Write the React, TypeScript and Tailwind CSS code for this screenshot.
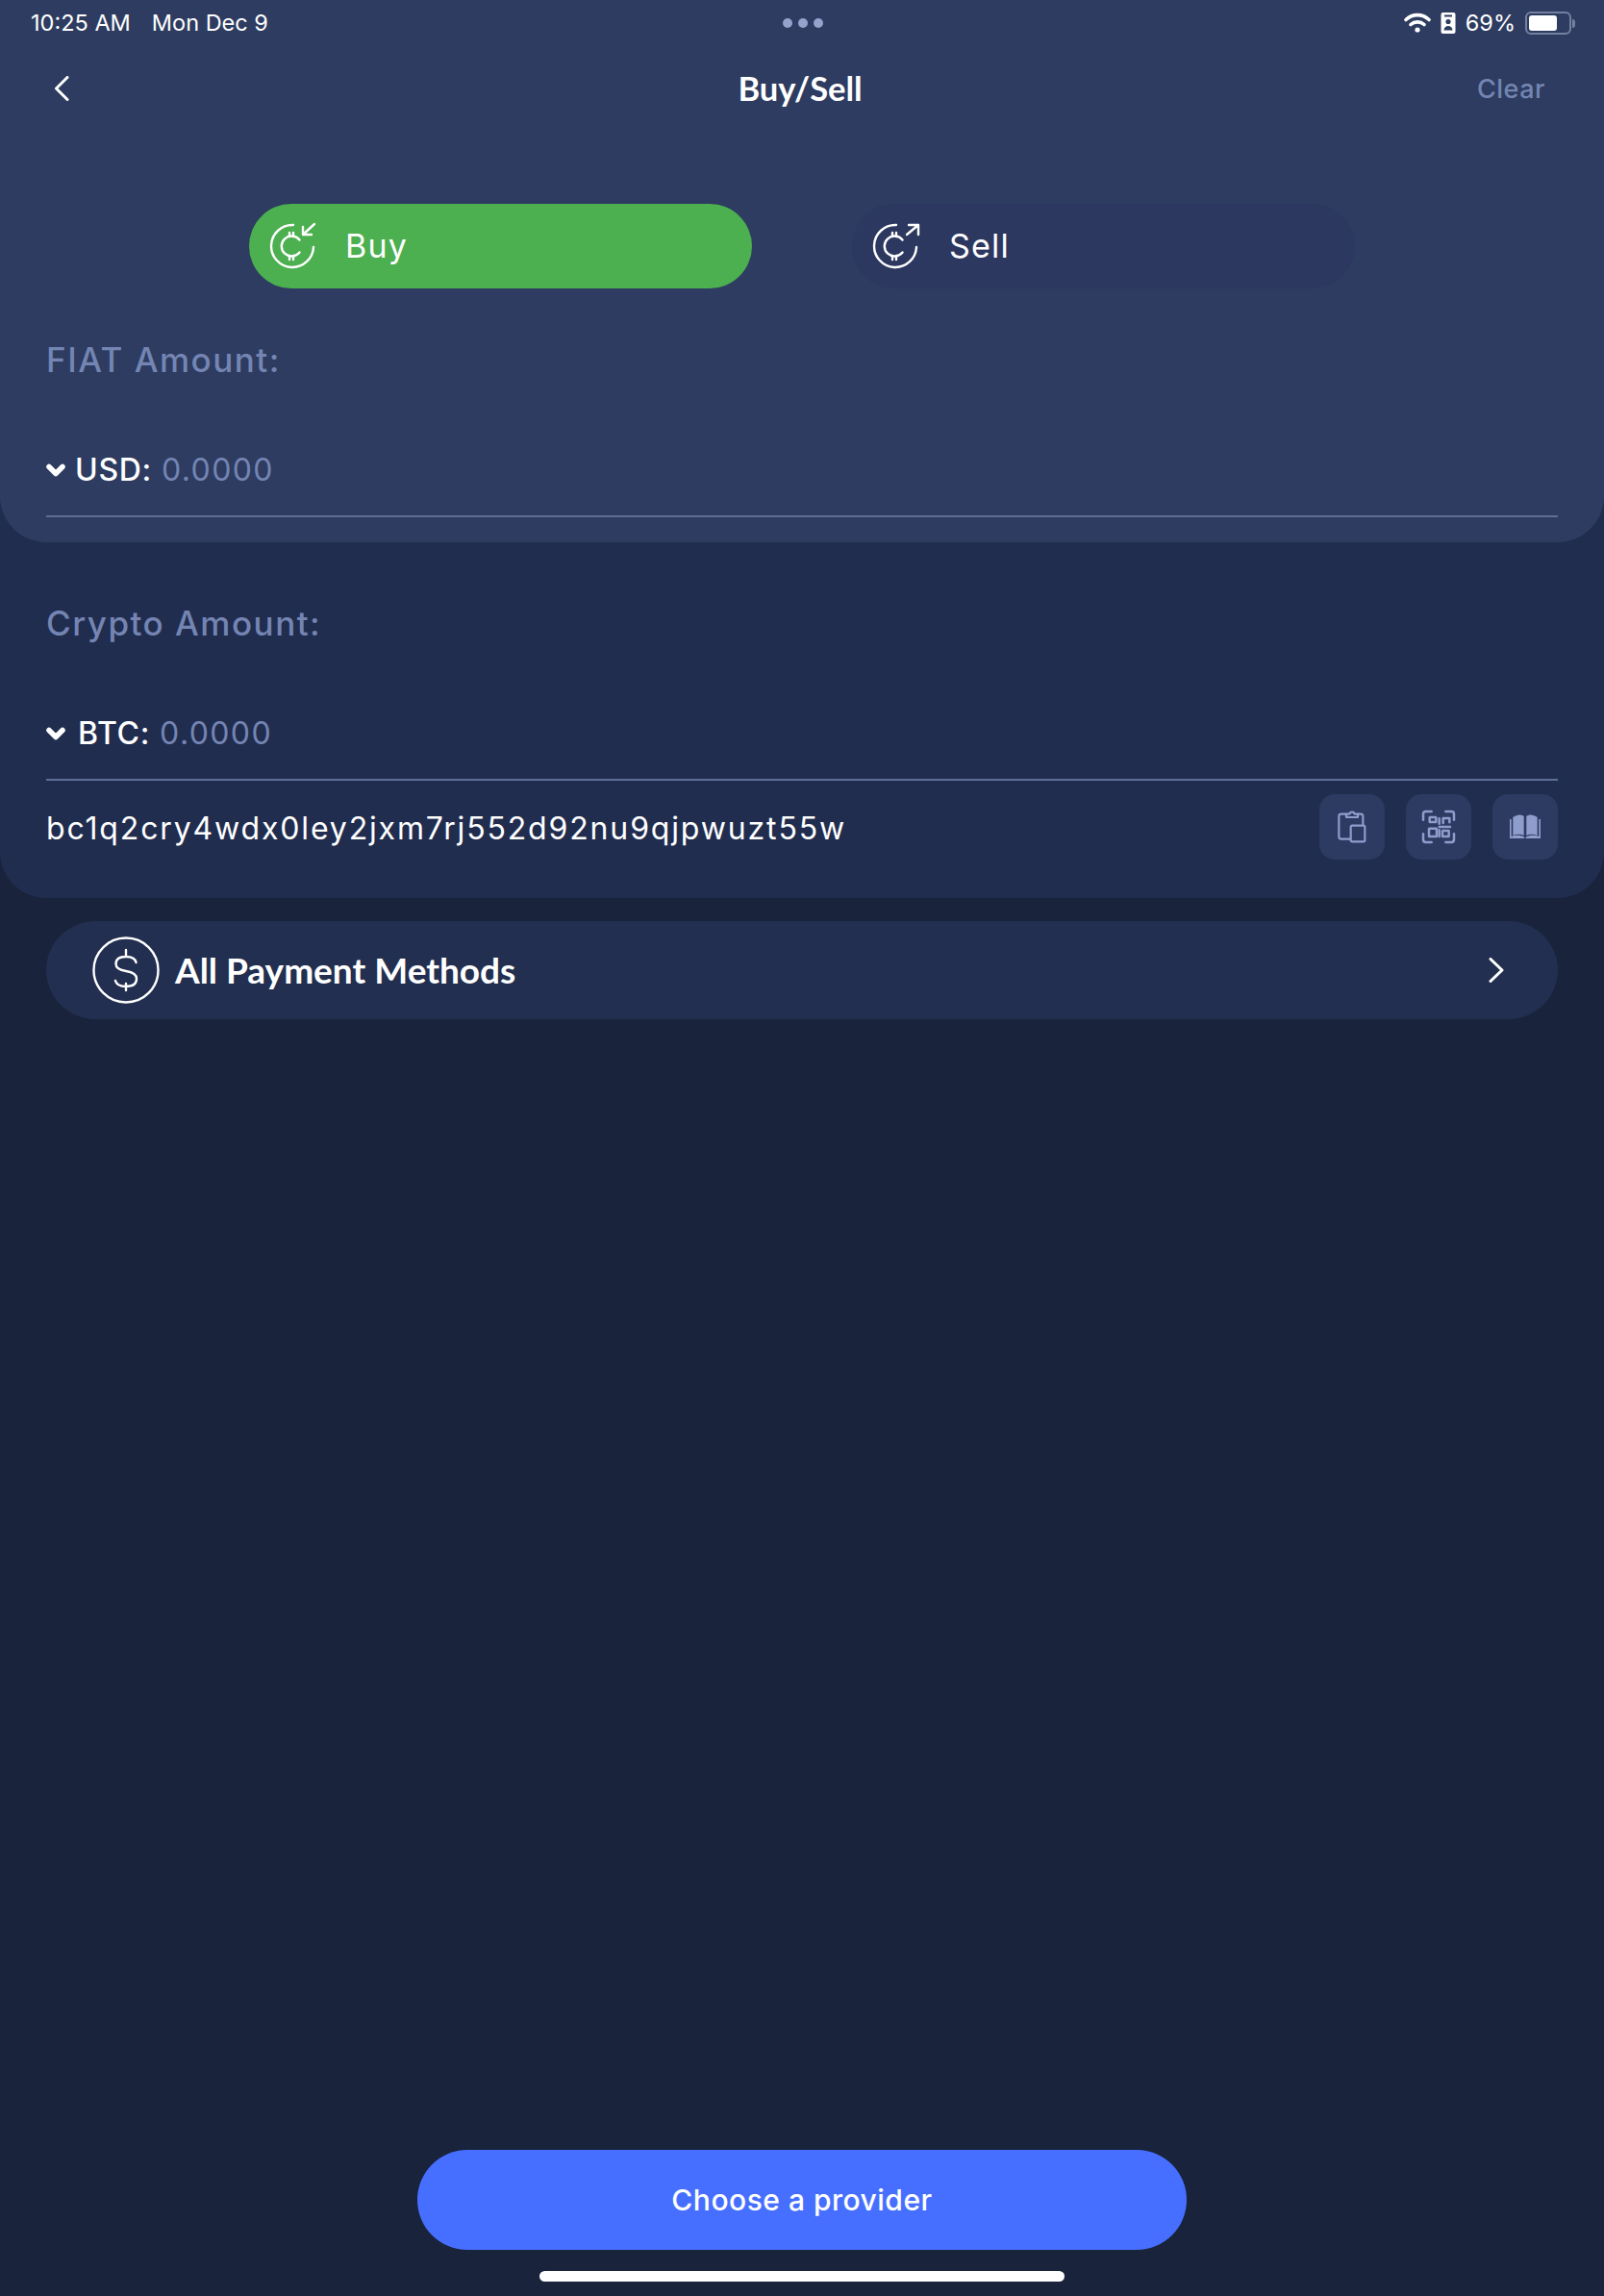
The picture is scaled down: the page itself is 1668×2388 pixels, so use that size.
const inter = "font-['Inter',sans-serif]";
const lato = "font-['Lato',sans-serif]";

function Coin({ dir }: { dir: "in" | "out" }) {
  return (
    <svg width="56" height="56" viewBox="0 0 56 56" fill="none" stroke="#fff" strokeWidth="2.4" strokeLinecap="round" strokeLinejoin="round" className="shrink-0">
      <path d="M25 6 A22 22 0 1 0 46 29" />
      <path d="M31.5 21.5 A10.5 10.5 0 1 0 31.5 34.5" />
      <path d="M21 14v4M25 14v4M21 38v4M25 38v4" />
      {dir === "in" ? <path d="M35 8v8h9M35 16L47 5" /> : <path d="M38 6h10v10M48 6L36 16" />}
    </svg>
  );
}

function Chevron() {
  return (
    <svg width="20" height="14" viewBox="0 0 20 14" className="shrink-0">
      <path d="M3 3.5L10 10.5L17 3.5" fill="none" stroke="#fff" strokeWidth="5.5" strokeLinecap="round" strokeLinejoin="round" />
    </svg>
  );
}

function AmountRow({ code, gap, valueGap, track }: { code: string; gap: string; valueGap: string; track: string }) {
  return (
    <div className={`flex h-[74px] items-start border-b-2 border-[#5e6e96] ${inter}`}>
      <div className="flex h-[50px] items-center">
        <Chevron />
        <span className={`${gap} text-[32px] font-medium ${track} text-white`}>{code}:</span>
        <span className={`${valueGap} text-[32px] tracking-[1.4px] text-[#7485b3]`}>0.0000</span>
      </div>
    </div>
  );
}

function IconButton({ children }: { children: React.ReactNode }) {
  return <div className="flex h-[68px] w-[68px] items-center justify-center rounded-[16px] bg-[#2d3a62]">{children}</div>;
}

export default function App() {
  return (
    <div className="flex h-[2388px] w-[1668px] flex-col overflow-hidden bg-[#19233c]">
      <div className="rounded-b-[48px] bg-[#212d4f]">
        <div className="h-[564px] rounded-b-[48px] bg-[#2d3c60]">
          {/* status bar */}
          <div className={`flex h-[48px] items-center justify-between pl-[32px] pr-[30px] text-[23.5px] text-white ${inter}`}>
            <div className="flex w-[400px] gap-[22px]">
              <span>10:25 AM</span>
              <span>Mon Dec 9</span>
            </div>
            <div className="flex gap-[6px]">
              <span className="h-[10px] w-[10px] rounded-full bg-[#94a3cb]" />
              <span className="h-[10px] w-[10px] rounded-full bg-[#94a3cb]" />
              <span className="h-[10px] w-[10px] rounded-full bg-[#94a3cb]" />
            </div>
            <div className="flex w-[400px] items-center justify-end">
              <svg width="28" height="22" viewBox="0 0 28 22" fill="none" stroke="#fff" strokeWidth="3.6" strokeLinecap="round">
                <path d="M2 7.5C9 1 19 1 26 7.5" />
                <path d="M7 12.5C11 9 17 9 21 12.5" />
                <circle cx="14" cy="18" r="2.6" fill="#fff" stroke="none" />
              </svg>
              <svg width="16" height="24" viewBox="0 0 16 24" className="ml-[10px]">
                <rect x="0.5" y="1" width="15" height="22" rx="2" fill="#fff" />
                <rect x="4" y="3.5" width="8" height="2" fill="#2d3c60" />
                <circle cx="8" cy="10.5" r="2.6" fill="#2d3c60" />
                <path d="M3.500 19.5c0-6 9-6 9 0z" fill="#2d3c60" />
              </svg>
              <span className="ml-[10px]">69%</span>
              <div className="ml-[10px] flex items-center">
                <div className="flex h-[24px] w-[48px] items-center rounded-[6px] border-2 border-[#74809f] p-[2px]">
                  <div className="h-[16px] w-[29px] rounded-[3px] bg-white" />
                </div>
                <div className="ml-[1px] h-[9px] w-[3px] rounded-r-full bg-[#74809f]" />
              </div>
            </div>
          </div>

          {/* header */}
          <div className="flex h-[88px] items-center justify-between pl-[56px] pr-[60px]">
            <svg width="16" height="26" viewBox="0 0 16 26" fill="none" stroke="#fff" strokeWidth="3" strokeLinecap="round" strokeLinejoin="round" className="w-[72px]" preserveAspectRatio="xMinYMid">
              <path d="M14 1.5L2.5 13L14 24.5" />
            </svg>
            <span className={`text-[34.5px] font-bold text-white ${lato}`}>Buy/Sell</span>
            <span className={`w-[72px] pt-[2px] text-[27px] font-medium tracking-[0.5px] text-[#7485b3] ${inter}`}>Clear</span>
          </div>

          {/* toggle */}
          <div className={`mt-[76px] flex justify-center gap-[104px] text-[34px] tracking-[1.2px] text-white ${inter}`}>
            <div className="flex h-[88px] w-[523px] items-center gap-[23px] rounded-full bg-[#4caf50] pl-[21px]">
              <Coin dir="in" />
              <span className="pb-[2px]">Buy</span>
            </div>
            <div className="flex h-[88px] w-[523px] items-center gap-[24px] rounded-full bg-[#2d3860] pl-[21px]">
              <Coin dir="out" />
              <span className="pb-[2px]">Sell</span>
            </div>
          </div>

          {/* fiat */}
          <div className="px-[48px]">
            <div className={`mt-[54px] h-[40px] text-[35px] font-medium leading-[40px] tracking-[1.5px] text-[#7485b3] ${inter}`}>FIAT Amount:</div>
            <div className="mt-[70px]">
              <AmountRow code="USD" gap="ml-[10px]" valueGap="ml-[10px]" track="tracking-[0.7px]" />
            </div>
          </div>
        </div>

        {/* crypto */}
        <div className="px-[48px] pb-[40px]">
          <div className={`mt-[64px] h-[40px] text-[35px] font-medium leading-[40px] tracking-[1.5px] text-[#7485b3] ${inter}`}>Crypto Amount:</div>
          <div className="mt-[70px]">
            <AmountRow code="BTC" gap="ml-[13px]" valueGap="ml-[10px]" track="tracking-[0.7px]" />
          </div>
          <div className="mt-[14px] flex h-[68px] items-center justify-between">
            <span className={`pt-[4px] text-[32px] tracking-[1.85px] text-white ${inter}`}>bc1q2cry4wdx0ley2jxm7rj552d92nu9qjpwuzt55w</span>
            <div className="flex gap-[22px]">
              <IconButton>
                <svg width="68" height="68" viewBox="0 0 204 204" fill="none" stroke="#8f9dcc" strokeWidth="6.5" strokeLinejoin="round">
                  <path d="M98 140H68a7 7 0 0 1-7-7V69a7 7 0 0 1 7-7h16M120 62h9a7 7 0 0 1 7 7v29" />
                  <path d="M84 72V62h10c2-8 14-8 16 0h10v10z" />
                  <rect x="98" y="98" width="44" height="50" rx="5" />
                </svg>
              </IconButton>
              <IconButton>
                <svg width="68" height="68" viewBox="0 0 204 204" fill="none" stroke="#8f9dcc" strokeWidth="7.5" strokeLinecap="round" strokeLinejoin="round">
                  <path d="M54 80V62a8 8 0 0 1 8-8h18M124 54h18a8 8 0 0 1 8 8v18M150 124v18a8 8 0 0 1-8 8h-18M80 150H62a8 8 0 0 1-8-8v-18" />
                  <rect x="74" y="72" width="20" height="15" rx="1" />
                  <rect x="72" y="107" width="24" height="25" rx="1" />
                  <rect x="114" y="114" width="20" height="18" rx="1" />
                  <path d="M104 76v16M116 90V75h20v13M104 102h34M104 112v20" />
                </svg>
              </IconButton>
              <IconButton>
                <svg width="68" height="68" viewBox="0 0 204 204" fill="#8f9dcc">
                  <path d="M64 72c12-9 26-10 34-3v60c-10-5-22-5-34 0z" />
                  <path d="M140 72c-12-9-26-10-34-3v60c10-5 22-5 34 0z" />
                  <path d="M54 78h5v54c13-5 28-5 41 2v4H54zM150 78h-5v54c-13-5-28-5-41 2v4h46z" />
                </svg>
              </IconButton>
            </div>
          </div>
        </div>
      </div>

      {/* payment methods */}
      <div className="mx-[48px] mt-[24px] flex h-[102px] items-center rounded-full bg-[#222f50] pl-[48px] pr-[56px]">
        <svg width="70" height="70" viewBox="0 0 70 70" fill="none" stroke="#fff" className="shrink-0">
          <circle cx="35" cy="35" r="33.5" strokeWidth="2.4" />
          <path d="M45.5 27c-1-4-5-6-10.500-6-7 0-10.500 3-10.500 7.500s4 6.500 10.500 7.500c7 1 11 3 11 8s-4 8-11 8c-6 0-10-2-11-6M35 14v7M35 49v7" strokeWidth="2.4" strokeLinecap="round" />
        </svg>
        <span className={`ml-[16px] text-[37px] font-bold text-white ${lato}`}>All Payment Methods</span>
        <svg width="16" height="26" viewBox="0 0 16 26" fill="none" stroke="#fff" strokeWidth="3" strokeLinecap="round" strokeLinejoin="round" className="ml-auto">
          <path d="M2 1.5L14 13L2 24.5" />
        </svg>
      </div>

      {/* bottom */}
      <div className="mt-auto flex flex-col items-center pb-[15px]">
        <div className={`flex h-[104px] w-[800px] items-center justify-center rounded-full bg-[#476fff] text-[30px] font-medium tracking-[0.5px] text-white ${inter}`}>Choose a provider</div>
        <div className="mt-[22px] h-[11px] w-[546px] rounded-full bg-white" />
      </div>
    </div>
  );
}
